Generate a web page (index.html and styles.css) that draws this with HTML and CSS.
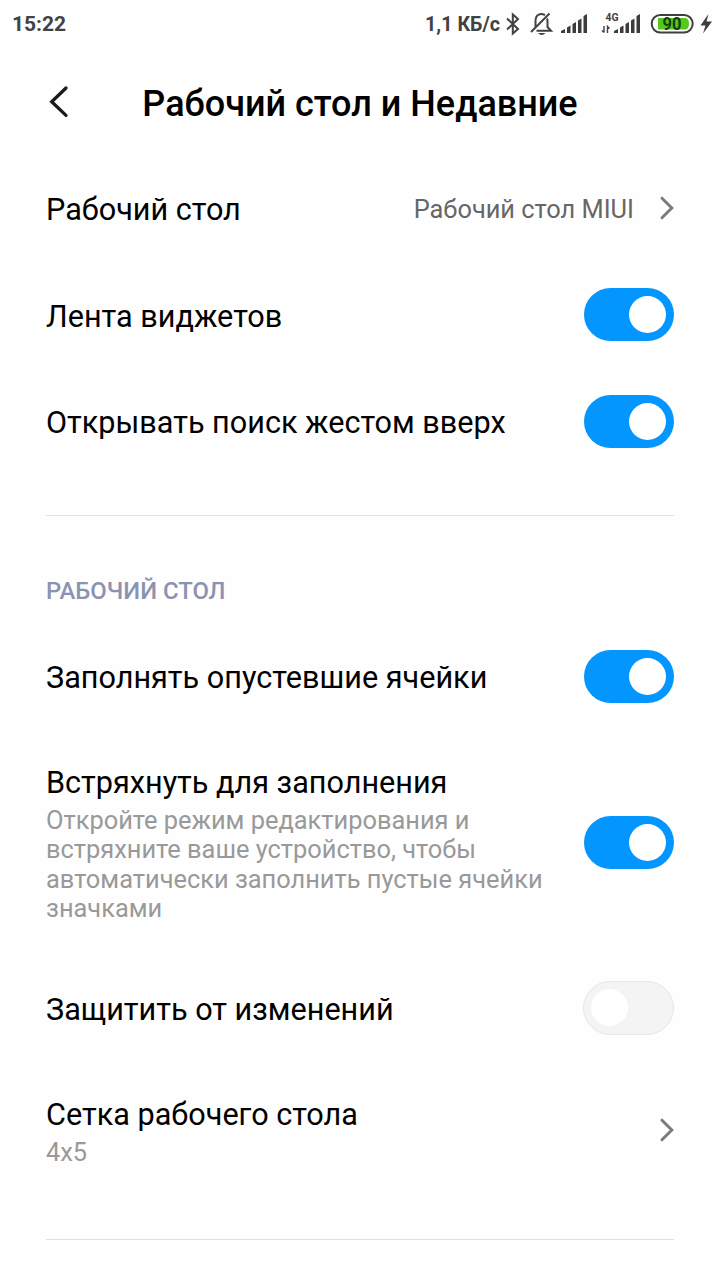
FILE: index.html
```html
<!DOCTYPE html>
<html lang="ru">
<head>
<meta charset="utf-8">
<title>Рабочий стол и Недавние</title>
<link rel="stylesheet" href="styles.css">
</head>
<body>
<div class="screen">
  <div class="status">
    <span class="clock">15:22</span>
    <span class="speed">1,1 КБ/с</span>
    <svg class="status-icons" width="216" height="48" viewBox="504 0 216 48">
      <g fill="none" stroke="#424242" stroke-width="2">
        <path d="M507 18.500L518 29L512.800 33.500V14.500L518 19L507 29.500"/>
        <path d="M536.500 30.800H551L547.500 27V21Q547.500 19.500 547 18.500M535.500 27V21C535.500 14 541 13 545 15.200M531 32L549.500 13.500"/>
      </g>
      <path d="M538 33H545.500Q541.700 37 538 33Z" fill="#424242"/>
      <g fill="#3c3c3c">
        <path d="M561 33V31L565 29V33ZM567 33V27.500L570.500 25.500V33ZM572.500 33V24L576 22V33ZM578 33V20.500L581.500 18.500V33ZM583.500 33V16L587 14V33Z"/>
        <path d="M614 33V31L618 29V33ZM620 33V27.500L623.500 25.500V33ZM625.500 33V24L629 22V33ZM631 33V20.500L634.500 18.500V33ZM636.500 33V16L640 14V33Z"/>
        <path d="M708.500 14L700.500 25.500H705.500L703 33.500L712 21.500H706.500Z"/>
      </g>
      <path d="M604 26V32.500M602 30.500L604 32.500M607.500 33V26.500L609.500 28.500" fill="none" stroke="#424242" stroke-width="1.400"/>
      <text class="network" x="605.500" y="20.800" textLength="13" lengthAdjust="spacingAndGlyphs">4G</text>
      <rect x="651.700" y="15" width="41" height="17.500" rx="8.700" fill="#fff" stroke="#3f3f3f" stroke-width="2"/>
      <path d="M658 18H685Q689 18 689 23.700Q689 29.500 685 29.500H658Z" fill="#55c81e"/>
      <text class="charge" x="672" y="30" textLength="19" lengthAdjust="spacingAndGlyphs">90</text>
    </svg>
  </div>
  <header class="header">
    <svg class="back" width="20" height="34" viewBox="0 0 20 34"><path d="M17 3L2.700 16.700L17 30.400" fill="none" stroke="#1a1a1a" stroke-width="3.300" stroke-linecap="round"/></svg>
    <h1 class="title">Рабочий стол и Недавние</h1>
  </header>
  <main class="list">
    <div class="row">
      <div class="label">Рабочий стол</div>
      <div class="value">Рабочий стол MIUI</div>
      <svg class="chevron" width="15" height="24" viewBox="0 0 15 24"><path d="M3 2.200L12.800 12L3 21.800" fill="none" stroke="#7c7c7c" stroke-width="3" stroke-linecap="round"/></svg>
    </div>
    <div class="row"><div class="label">Лента виджетов</div><div class="switch on"></div></div>
    <div class="row"><div class="label">Открывать поиск жестом вверх</div><div class="switch on"></div></div>
    <div class="divider"></div>
    <h2 class="section">РАБОЧИЙ СТОЛ</h2>
    <div class="row"><div class="label">Заполнять опустевшие ячейки</div><div class="switch on"></div></div>
    <div class="row tall">
      <div class="label">Встряхнуть для заполнения
        <p class="summary">Откройте режим редактирования и<br>встряхните ваше устройство, чтобы<br>автоматически заполнить пустые ячейки<br>значками</p>
      </div>
      <div class="switch on"></div>
    </div>
    <div class="row"><div class="label">Защитить от изменений</div><div class="switch off"></div></div>
    <div class="row double">
      <div class="label">Сетка рабочего стола<p class="summary">4x5</p></div>
      <svg class="chevron" width="15" height="24" viewBox="0 0 15 24"><path d="M3 2.200L12.800 12L3 21.800" fill="none" stroke="#7c7c7c" stroke-width="3" stroke-linecap="round"/></svg>
    </div>
    <div class="divider"></div>
  </main>
</div>
</body>
</html>
```
FILE: styles.css
```css
* { box-sizing: border-box; }
body { margin: 0; background: #fff; font-family: Roboto, "Noto Sans", sans-serif; color: #000; }
.screen { width: 720px; height: 1280px; overflow: hidden; background: #fefefe; }
.status { display: flex; align-items: center; height: 48px; padding-left: 12px; color: #424242; font-weight: 700; font-size: 19.700px; }
.clock { font-size: 21px; }
.speed { margin-left: auto; margin-right: 4px; padding-top: 1px; white-space: nowrap; }
.status-icons { flex: none; display: block; }
.network { font-size: 11px; font-weight: 700; fill: #424242; }
.charge { font-size: 18px; font-weight: 700; fill: #16400c; text-anchor: middle; }
.header { display: flex; align-items: center; height: 107px; padding: 0 49px; }
.back { flex: none; display: block; }
.title { flex: 1; margin: 4px 20px 0 0; text-align: center; font-size: 36px; font-weight: 500; white-space: nowrap; }
.list { padding: 0 46px; }
.row { display: flex; align-items: center; height: 106.500px; }
.row.tall { height: 225px; }
.row.double { height: 137.500px; }
.label { flex: 1; font-size: 30.620px; line-height: 36px; white-space: nowrap; padding-top: 4px; }
.summary { margin: 5px 0 0; font-size: 25.400px; line-height: 29.300px; color: #999; }
.value { font-size: 25.400px; color: #666; margin-right: 25px; padding-top: 1px; }
.chevron { flex: none; display: block; }
.switch { flex: none; width: 90px; height: 53px; border-radius: 27px; padding: 8px; display: flex; }
.switch::before { content: ""; width: 37px; height: 37px; border-radius: 50%; background: #fff; }
.switch.on { background: #0496ff; justify-content: flex-end; }
.switch.off { background: #f4f4f4; border: 1px solid #e6e6e6; width: 91px; height: 54px; padding: 7px; }
.divider { height: 1px; background: #e0e0e0; margin-top: 40.500px; }
.section { margin: 60px 0 17px; height: 30px; line-height: 30px; font-size: 23.900px; font-weight: 500; color: #8c93b0; }
```
